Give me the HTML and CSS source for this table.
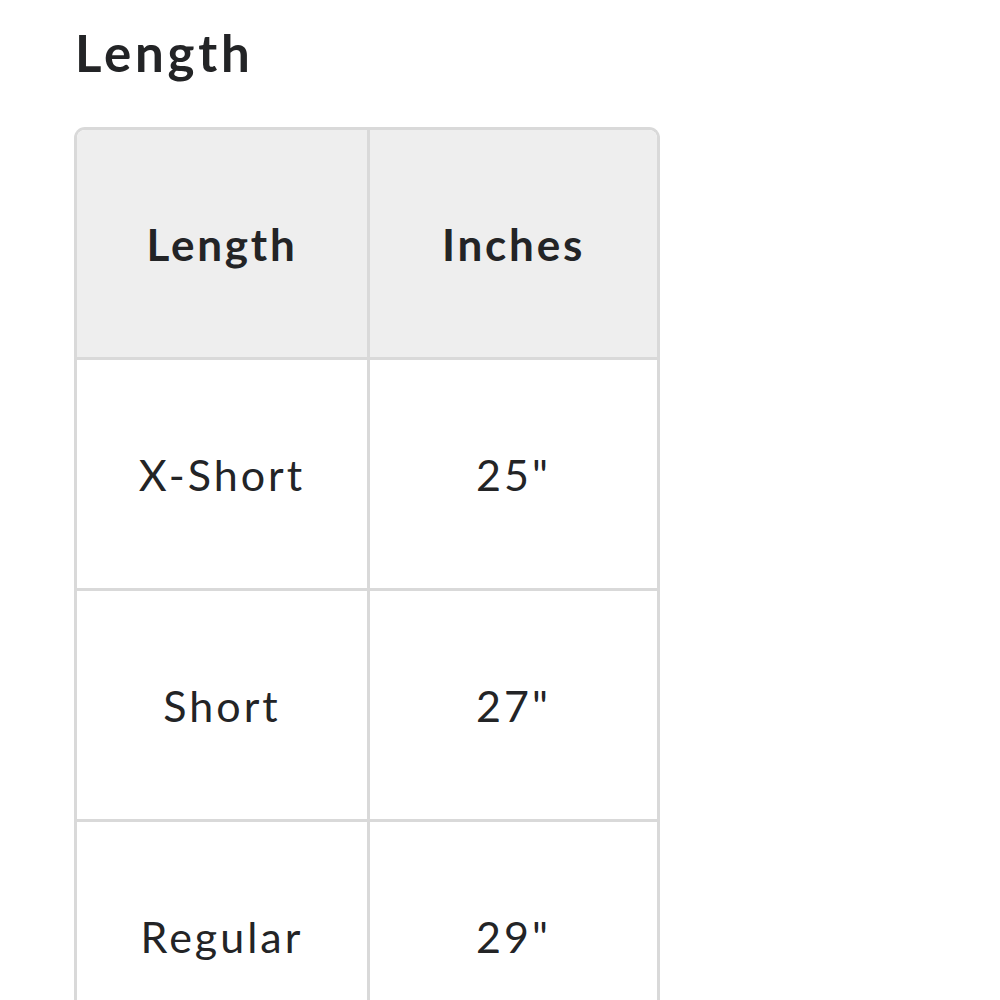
FILE: index.html
```html
<!DOCTYPE html>
<html>
<head>
<meta charset="utf-8">
<link rel="stylesheet" href="styles.css">
</head>
<body>
<div class="page">
  <h2 class="title">Length</h2>
  <div class="table-wrap">
    <table class="size-table">
      <thead>
        <tr><th>Length</th><th>Inches</th></tr>
      </thead>
      <tbody>
        <tr><td>X-Short</td><td>25"</td></tr>
        <tr><td>Short</td><td>27"</td></tr>
        <tr><td>Regular</td><td>29"</td></tr>
      </tbody>
    </table>
  </div>
</div>
</body>
</html>
```
FILE: styles.css
```css
html, body {
  margin: 0;
  padding: 0;
  background: #fff;
}
body {
  font-family: Lato, "Open Sans", sans-serif;
  color: #232426;
}
.page {
  padding: 23px 0 0 74px;
}
.title {
  margin: 0 0 0 1px;
  font-size: 51px;
  font-weight: 700;
  line-height: 60px;
  letter-spacing: 3.8px;
}
.table-wrap {
  margin-top: 44px;
  width: 586px;
  border: 3px solid #d9d9d9;
  border-bottom: none;
  border-radius: 11px 11px 0 0;
  overflow: hidden;
  box-sizing: border-box;
}
.size-table {
  width: 100%;
  border-collapse: separate;
  border-spacing: 0;
  table-layout: fixed;
}
.size-table th,
.size-table td {
  text-align: center;
  vertical-align: middle;
  border-bottom: 3px solid #d9d9d9;
  padding: 0;
}
.size-table th:first-child,
.size-table td:first-child {
  border-right: 3px solid #d9d9d9;
  width: 290px;
}
.size-table th {
  background: #eeeeee;
  height: 227px;
  font-size: 44px;
  font-weight: 700;
  letter-spacing: 2.8px;
}
.size-table td {
  height: 228px;
  font-size: 43px;
  font-weight: 400;
  letter-spacing: 3px;
}
```
